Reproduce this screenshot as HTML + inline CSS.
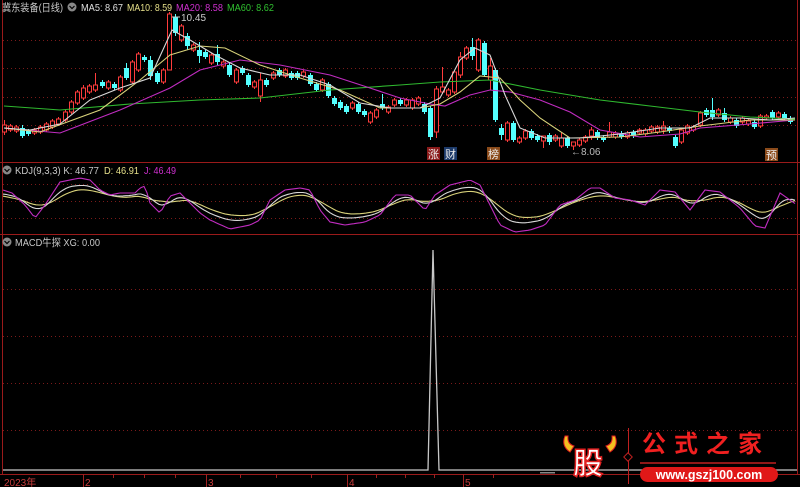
<!DOCTYPE html>
<html><head><meta charset="utf-8"><style>
html,body{margin:0;padding:0;background:#000;width:800px;height:487px;overflow:hidden}
svg{display:block}
text{font-family:"Liberation Sans","Noto Sans CJK SC",sans-serif}
</style></head><body>
<svg id="s" width="800" height="487" viewBox="0 0 800 487" xmlns="http://www.w3.org/2000/svg">
<rect width="800" height="487" fill="#000"/>
<g stroke="#9a1a1a" stroke-width="1" fill="none">
<line x1="2.5" y1="0" x2="2.5" y2="474"/>
<line x1="797.5" y1="0" x2="797.5" y2="474"/>
<line x1="0" y1="162.5" x2="800" y2="162.5"/>
<line x1="0" y1="234.5" x2="800" y2="234.5"/>
<line x1="0" y1="474.5" x2="800" y2="474.5"/>
</g>
<g stroke="#7a1a1a" stroke-width="1" stroke-dasharray="1,3">
<line x1="3" y1="40.5" x2="797" y2="40.5"/>
<line x1="3" y1="68.5" x2="797" y2="68.5"/>
<line x1="3" y1="97.5" x2="797" y2="97.5"/>
<line x1="3" y1="125.5" x2="797" y2="125.5"/>
<line x1="3" y1="184.5" x2="797" y2="184.5"/>
<line x1="3" y1="201.5" x2="797" y2="201.5"/>
<line x1="3" y1="218.5" x2="797" y2="218.5"/>
<line x1="3" y1="289.5" x2="797" y2="289.5"/>
<line x1="3" y1="336.5" x2="797" y2="336.5"/>
<line x1="3" y1="383.5" x2="797" y2="383.5"/>
<line x1="3" y1="430.5" x2="797" y2="430.5"/>
</g>
<g id="candles"></g>
<g fill="none" stroke-width="1.1">
<polyline stroke="#2fb82f" points="4,106 60,110 130,104 200,100 260,98 330,90 400,85 440,82 490,80 540,90 600,100 650,106 700,112 750,117 795,119"/>
<polyline stroke="#c02cc0" points="4,128 60,133 120,110 170,88 200,70 240,60 280,65 330,75 370,88 400,98 430,104 445,106 470,95 490,90 510,92 540,100 570,112 600,130 640,137 680,134 700,128 750,124 795,120"/>
<polyline stroke="#d8d27a" points="4,128 40,132 100,110 140,80 170,55 200,46 225,48 260,65 300,78 340,90 380,108 420,108 440,104 460,92 480,76 500,78 520,100 540,118 570,138 620,137 660,132 700,126 750,120 795,120"/>
<polyline stroke="#d8d8d8" points="4,128 30,130 60,124 90,100 120,88 150,78 172,30 190,40 215,55 240,68 270,75 300,75 330,85 360,103 390,108 420,108 440,98 460,60 475,48 490,55 505,95 520,128 545,138 580,138 620,134 660,128 690,128 710,118 740,118 770,120 795,118"/>
</g>
<text x="181" y="21" font-size="10" fill="#cccccc">10.45</text>
<line x1="172" y1="17" x2="180" y2="17" stroke="#ccc"/>
<text x="571" y="155" font-size="10" fill="#bbbbbb">←8.06</text>
<rect x="427" y="147" width="13" height="13" fill="#8a1a1a"/><text x="428" y="158" font-size="11" fill="#eee">涨</text>
<rect x="444" y="147" width="13" height="13" fill="#1c3a6a"/><text x="445" y="158" font-size="11" fill="#eee">财</text>
<rect x="487" y="147" width="13" height="13" fill="#8a4a1a"/><text x="488" y="158" font-size="11" fill="#eee">榜</text>
<rect x="765" y="148" width="13" height="13" fill="#8a4a1a"/><text x="766" y="159" font-size="11" fill="#eee">预</text>
<text x="2" y="11" font-size="10.5" fill="#c8c8c8" textLength="61" lengthAdjust="spacingAndGlyphs">冀东装备(日线)</text>
<circle cx="72" cy="7" r="4.5" fill="#888"/><path d="M69.5 6 L72 8.5 L74.5 6" stroke="#000" fill="none" stroke-width="1.2"/>
<text x="81" y="11" font-size="10.5" fill="#e0e0e0" textLength="42" lengthAdjust="spacingAndGlyphs">MA5: 8.67</text>
<text x="127" y="11" font-size="10.5" fill="#e6e08a" textLength="45" lengthAdjust="spacingAndGlyphs">MA10: 8.59</text>
<text x="176" y="11" font-size="10.5" fill="#d030d0" textLength="47" lengthAdjust="spacingAndGlyphs">MA20: 8.58</text>
<text x="227" y="11" font-size="10.5" fill="#30c030" textLength="47" lengthAdjust="spacingAndGlyphs">MA60: 8.62</text>
<circle cx="7" cy="170" r="4.5" fill="#888"/><path d="M4.5 169 L7 171.5 L9.5 169" stroke="#000" fill="none" stroke-width="1.2"/>
<text x="15" y="174" font-size="10.5" fill="#c8c8c8" textLength="84" lengthAdjust="spacingAndGlyphs">KDJ(9,3,3)  K: 46.77</text>
<text x="104" y="174" font-size="10.5" fill="#e6e08a" textLength="35" lengthAdjust="spacingAndGlyphs">D: 46.91</text>
<text x="144" y="174" font-size="10.5" fill="#d030d0" textLength="32" lengthAdjust="spacingAndGlyphs">J: 46.49</text>
<g id="kdj" fill="none" stroke-width="1.1"></g>
<circle cx="7" cy="242" r="4.5" fill="#888"/><path d="M4.5 241 L7 243.5 L9.5 241" stroke="#000" fill="none" stroke-width="1.2"/>
<text x="15" y="246" font-size="10.5" fill="#c8c8c8" textLength="85" lengthAdjust="spacingAndGlyphs">MACD牛探 XG: 0.00</text>
<polyline fill="none" stroke="#c8c8c8" stroke-width="1.3" points="3,470 428,470 433,250 439,470 797,470"/>
<g stroke="#a02020">
<line x1="83.5" y1="474" x2="83.5" y2="487"/><line x1="206.5" y1="474" x2="206.5" y2="487"/>
<line x1="347.5" y1="474" x2="347.5" y2="487"/><line x1="463.5" y1="474" x2="463.5" y2="487"/>
<line x1="113.5" y1="474" x2="113.5" y2="478"/><line x1="144.5" y1="474" x2="144.5" y2="478"/><line x1="175.5" y1="474" x2="175.5" y2="478"/>
<line x1="240.5" y1="474" x2="240.5" y2="478"/><line x1="276.5" y1="474" x2="276.5" y2="478"/><line x1="311.5" y1="474" x2="311.5" y2="478"/>
<line x1="376.5" y1="474" x2="376.5" y2="478"/><line x1="405.5" y1="474" x2="405.5" y2="478"/><line x1="434.5" y1="474" x2="434.5" y2="478"/>
<line x1="493.5" y1="474" x2="493.5" y2="478"/>
</g>
<g font-size="10" fill="#c83c3c">
<text x="4" y="486">2023年</text><text x="85" y="486">2</text><text x="208" y="486">3</text><text x="349" y="486">4</text><text x="465" y="486">5</text>
</g>
<rect x="540" y="472" width="15" height="1.5" fill="#888"/>
<path d="M565 436 Q561 446 570 452 L574 446 Q567 444 568 436 Z" fill="#f2c020" stroke="#e02020"/>
<path d="M615 436 Q619 446 610 452 L606 446 Q613 444 612 436 Z" fill="#f2c020" stroke="#e02020"/>
<text x="573" y="474" font-size="30" font-weight="bold" fill="#fff" stroke="#e02020" stroke-width="1.5" font-family="Noto Sans CJK SC,sans-serif">股</text>
<line x1="628.5" y1="428" x2="628.5" y2="484" stroke="#c02020"/>
<rect x="625" y="454" width="6" height="6" transform="rotate(45 628 457)" fill="#000" stroke="#c02020"/>
<text x="642" y="452" font-size="24" font-weight="bold" fill="#f02020" font-family="Noto Serif CJK SC,serif" letter-spacing="8">公式之家</text>
<line x1="640" y1="463" x2="776" y2="463" stroke="#c02020" stroke-width="1.5"/>
<rect x="640" y="467" width="138" height="15" rx="7.5" fill="#e01818"/>
<text x="709" y="479" font-size="12.5" font-weight="bold" fill="#fff" text-anchor="middle">www.gszj100.com</text>
</svg>
<script>
var C=[[4,132,125,120,135],[10,130,126],[16,131,127],[22,128,136,125,138],[28,131,134],[34,133,130],[40,132,127],[46,130,124],[52,127,121],[58,124,119],[65,120,112],[71,112,102],[77,103,92],[83,98,88,85,100],[89,92,86],[95,90,85,73,92],[102,82,86],[108,88,82],[114,84,88],[120,90,77],[126,68,78,63,80],[132,82,62],[138,70,54],[144,57,60],[150,60,76,56,80],[157,73,82],[163,82,70],[169,70,14,12,70],[175,17,33,14,36],[181,40,26],[187,36,46,33,50],[193,50,45],[199,50,56,42,63],[205,52,57],[211,63,55],[217,54,62,45,65],[223,66,62],[229,65,75],[236,82,70],[242,68,73],[248,75,85],[254,87,82],[260,96,80,73,102],[266,80,85],[273,78,73],[279,70,75],[285,76,70],[291,73,78],[297,73,78],[303,76,72],[310,75,84],[316,84,90],[322,90,80],[328,84,96],[334,98,104],[340,102,108],[346,106,112],[352,108,103],[358,104,112],[364,111,115],[370,122,113],[376,117,110],[382,104,108,94,110],[388,112,107],[394,105,100],[400,100,104],[406,105,100],[412,108,100],[418,104,98],[424,104,112],[430,108,137,106,140],[436,132,89,86,138],[442,92,87,67,94],[448,95,90],[454,92,72],[460,75,57,52,78],[466,58,48],[472,47,56,38,60],[478,70,40],[484,43,75],[490,80,66,58,90],[495,70,120],[501,128,135,124,140],[507,140,123],[513,123,140],[519,142,138],[525,138,131],[531,131,138],[537,136,140],[543,141,136,136,148],[549,135,142,133,145],[555,140,136],[561,146,138,132,148],[567,138,146],[573,146,142,142,150],[579,145,140],[585,141,137],[591,136,130,127,140],[597,132,138],[603,137,140],[609,137,132,122,138],[615,137,133],[621,133,137],[627,137,133],[633,132,136],[639,133,130],[645,134,130],[651,131,127],[657,132,127],[663,130,126,121,134],[669,128,131],[675,137,146],[681,142,130],[687,133,126],[693,130,127],[700,125,113],[706,110,115],[712,110,117,98,120],[718,115,110],[724,113,120,108,122],[730,122,118],[736,120,126],[742,122,118],[748,124,121],[754,122,127],[760,126,116],[766,118,116],[772,112,118],[778,117,113],[784,114,118],[790,118,122]];
var g=document.getElementById("candles"),h="";
C.forEach(function(c){var x=c[0],o=c[1],cl=c[2],top=Math.min(o,cl),bot=Math.max(o,cl);var hi=c[3]||top-2,lo=c[4]||bot+2;var up=cl<o;var col=up?"#ff3c3c":"#54ffff";
h+='<line x1="'+(x+.5)+'" y1="'+hi+'" x2="'+(x+.5)+'" y2="'+lo+'" stroke="'+col+'"/>';
if(up)h+='<rect x="'+(x-1.5)+'" y="'+top+'" width="4" height="'+Math.max(1,bot-top)+'" fill="#000" stroke="'+col+'"/>';
else h+='<rect x="'+(x-2)+'" y="'+top+'" width="5" height="'+Math.max(1,bot-top)+'" fill="'+col+'"/>';});
g.innerHTML=h;
var J=[[3,190],[12,193],[25,205],[35,218],[45,205],[60,182],[80,178],[90,180],[100,190],[110,195],[120,193],[135,193],[140,188],[145,186],[150,203],[160,213],[170,196],[180,193],[190,203],[200,213],[210,220],[230,229],[250,225],[260,220],[270,200],[285,190],[300,188],[310,190],[320,210],[330,222],[345,225],[365,222],[380,215],[395,195],[410,195],[425,210],[435,195],[450,185],[470,180],[480,185],[490,205],[500,225],[515,232],[530,230],[545,225],[560,205],[575,200],[590,188],[600,188],[615,198],[630,200],[645,205],[660,190],[675,192],[690,210],[705,190],[720,192],[740,208],[755,226],[765,228],[780,193],[790,200],[797,205]];
function interp(x){for(var i=0;i<J.length-1;i++){if(x>=J[i][0]&&x<=J[i+1][0]){var t=(x-J[i][0])/(J[i+1][0]-J[i][0]);return J[i][1]+t*(J[i+1][1]-J[i][1]);}}return J[J.length-1][1];}
var xs=[];for(var x=3;x<=797;x+=3)xs.push(x);
var jv=xs.map(interp);
function lagavg(a,back,fwd){return a.map(function(v,i){var s=0,n=0;for(var k=i-back;k<=i+fwd;k++){if(k>=0&&k<a.length){s+=a[k];n++;}}return s/n;});}
var kk=lagavg(jv,4,2).map(function(v){return 202+(v-202)*0.72;});
var dd=lagavg(jv,7,3).map(function(v){return 202+(v-202)*0.55;});
function pl(arr,col){return '<polyline stroke="'+col+'" points="'+arr.map(function(v,i){return xs[i]+','+v.toFixed(1)}).join(' ')+'"/>';}
document.getElementById("kdj").innerHTML=pl(dd,"#d8d27a")+pl(kk,"#d8d8d8")+pl(jv,"#c02cc0");
</script>
</body></html>
